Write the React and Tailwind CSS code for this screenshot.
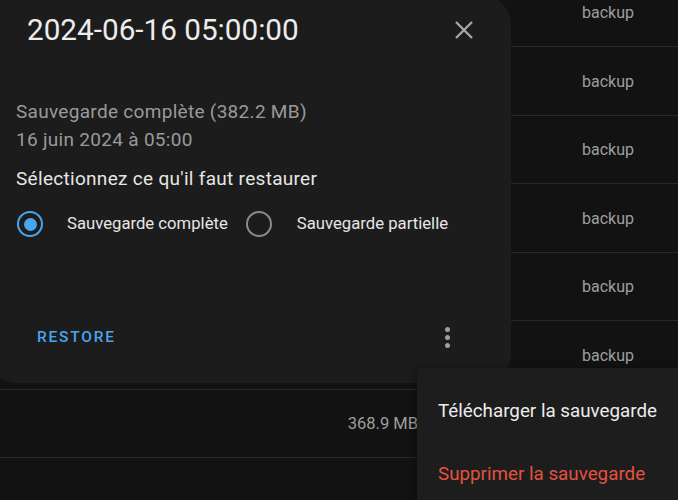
import React from "react";

// sizes under the dialog are hidden anyway, so only the visible one is listed
const rows = [
  { size: "", type: "backup" },
  { size: "", type: "backup" },
  { size: "", type: "backup" },
  { size: "", type: "backup" },
  { size: "", type: "backup" },
  { size: "", type: "backup" },
  { size: "368.9 MB", type: "" },
  { size: "", type: "" },
];

function Radio({ checked }) {
  return checked ? (
    <span className="flex h-[26px] w-[26px] shrink-0 items-center justify-center rounded-full border-[2.5px] border-[#47a6ef]">
      <span className="h-[13px] w-[13px] rounded-full bg-[#47a6ef]" />
    </span>
  ) : (
    <span className="h-[26px] w-[26px] shrink-0 rounded-full border-[2.5px] border-[#8a8a8a]" />
  );
}

function BackupList() {
  return (
    <div className="-mt-[21.5px]">
      {rows.map((row, i) => (
        <div
          key={i}
          className="flex h-[68.5px] items-center border-b border-[#282828] pt-[2px] text-[16px] text-[#9e9e9e]"
        >
          <div className="w-[418px] text-right text-[16.5px]">{row.size}</div>
          <div className="pl-[164px]">{row.type}</div>
        </div>
      ))}
    </div>
  );
}

function RestoreDialog() {
  return (
    <div className="absolute left-[-11px] top-[-4px] flex h-[387px] w-[522px] flex-col rounded-[28px] bg-[#1c1c1c]">
      <div className="flex h-[52px] items-end justify-between pl-[38px] pr-[35px]">
        <h2 className="text-[29.7px] leading-[36px] text-[#ececec]">2024-06-16 05:00:00</h2>
        <button className="mb-[6px] flex h-[24px] w-[24px] items-center justify-center">
          <svg width="18" height="18" viewBox="0 0 18 18" fill="none" stroke="#a8a8a8" strokeWidth="2.3">
            <path d="M1 1L17 17M17 1L1 17" />
          </svg>
        </button>
      </div>

      <div className="mt-[50px] px-[27px] tracking-[0.3px]">
        <p className="text-[19px] leading-[28px] text-[#9a9a9a]">
          Sauvegarde complète (382.2 MB)
          <br />
          16 juin 2024 à 05:00
        </p>
        <p className="mt-[11px] text-[19px] leading-[28px] text-[#e6e6e6]">
          Sélectionnez ce qu'il faut restaurer
        </p>
        <div className="mt-[11px] flex h-[40px] items-center text-[16.7px] tracking-normal text-[#e6e6e6]">
          <label className="flex items-center gap-[24px] pl-px">
            <Radio checked />
            <span>Sauvegarde complète</span>
          </label>
          <label className="ml-[18px] flex items-center gap-[25px]">
            <Radio />
            <span>Sauvegarde partielle</span>
          </label>
        </div>
      </div>

      <div className="mt-[70px] flex h-[48px] items-center justify-between pl-[48px] pr-[61px]">
        <button className="text-[15.5px] font-medium tracking-[1.8px] text-[#47a6ef]">RESTORE</button>
        <button className="-mt-[2px] flex flex-col items-center gap-[3px]">
          <span className="h-[5px] w-[5px] rounded-full bg-[#9e9e9e]" />
          <span className="h-[5px] w-[5px] rounded-full bg-[#9e9e9e]" />
          <span className="h-[5px] w-[5px] rounded-full bg-[#9e9e9e]" />
        </button>
      </div>
    </div>
  );
}

function ActionMenu() {
  return (
    <div className="absolute bottom-0 left-[417px] right-0 top-[368px] rounded-tl-[4px] bg-[#1d1d1d] pt-[12px] text-[18.8px] shadow-[0_2px_8px_rgba(0,0,0,0.5)]">
      <div className="flex h-[63px] items-center pl-[21px] text-[#ececec]">Télécharger la sauvegarde</div>
      <div className="flex h-[63px] items-center pl-[21px] text-[#e2523f]">Supprimer la sauvegarde</div>
    </div>
  );
}

export default function App() {
  return (
    <div className="relative h-[500px] w-[678px] overflow-hidden bg-[#121212] font-['Roboto',sans-serif]">
      <BackupList />
      <RestoreDialog />
      <ActionMenu />
    </div>
  );
}
